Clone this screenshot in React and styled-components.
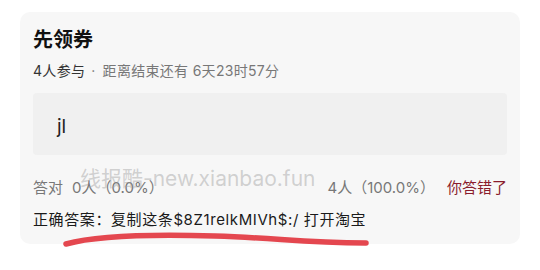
import React from "react";
import styled, { createGlobalStyle } from "styled-components";

const GlobalStyle = createGlobalStyle`
  body {
    margin: 0;
    background: #ffffff;
    font-family: Inter, "Noto Sans CJK SC", sans-serif;
  }
`;

const Page = styled.div`
  position: relative;
  width: 540px;
  height: 270px;
  overflow: hidden;
  padding-top: 12px;
  box-sizing: border-box;
`;

const Card = styled.div`
  margin-left: 20px;
  width: 500px;
  height: 232px;
  box-sizing: border-box;
  padding: 14px 13px 0 13px;
  background: #f7f7f7;
  border-radius: 10px;
  display: flex;
  flex-direction: column;
`;

const Title = styled.div`
  font-size: 20px;
  line-height: 28px;
  font-weight: 700;
  color: #111;
`;

const Meta = styled.div`
  margin-top: 7px;
  font-size: 14px;
  line-height: 20px;
  letter-spacing: 0.3px;
  color: #777;
`;

const Strong = styled.span`
  color: #333;
`;

const Dot = styled.span`
  margin: 0 7px 0 6px;
`;

const OptionBox = styled.div`
  margin-top: 12px;
  height: 62px;
  padding-left: 24px;
  background: #f0f0f0;
  border-radius: 4px;
  display: flex;
  align-items: center;
  font-size: 19px;
  color: #222;
  padding-top: 4px;
  box-sizing: border-box;
`;

const Stats = styled.div`
  margin-top: 22px;
  display: flex;
  align-items: center;
  font-size: 15px;
  line-height: 22px;
  color: #777;
`;

const Spacer = styled.div`
  flex: 1;
`;

const Gap = styled.span`
  display: inline-block;
  width: ${(p) => p.$w}px;
`;

const Wrong = styled.span`
  color: #8a1c2c;
`;

const Answer = styled.div`
  margin-top: 10px;
  font-size: 15px;
  line-height: 22px;
  letter-spacing: 0.6px;
  color: #1a1a1a;
`;

const Watermark = styled.div`
  position: absolute;
  left: 80px;
  top: 165px;
  font-size: 21px;
  line-height: 28px;
  color: rgba(160, 160, 160, 0.45);
  pointer-events: none;
  white-space: nowrap;
`;

const Scribble = styled.svg`
  position: absolute;
  left: 0;
  top: 0;
  pointer-events: none;
`;

export default function App() {
  return (
    <Page>
      <GlobalStyle />
      <Card>
        <Title>先领券</Title>
        <Meta>
          <Strong>4人参与</Strong>
          <Dot>·</Dot>距离结束还有 6天23时57分
        </Meta>
        <OptionBox>jl</OptionBox>
        <Stats>
          <span>答对</span>
          <Gap $w={9} />
          <span>0人（0.0%）</span>
          <Spacer />
          <span>4人（100.0%）</span>
          <Gap $w={12} />
          <Wrong>你答错了</Wrong>
        </Stats>
        <Answer>正确答案：复制这条$8Z1relkMIVh$:/ 打开淘宝</Answer>
      </Card>
      <Watermark>线报酷-new.xianbao.fun</Watermark>
      <Scribble width="540" height="270" viewBox="0 0 540 270">
        <path
          d="M66 244 C 95 236, 150 234, 215 236 S 300 243, 366 243"
          fill="none"
          stroke="#e4474f"
          strokeWidth="5.5"
          strokeLinecap="round"
        />
      </Scribble>
    </Page>
  );
}
